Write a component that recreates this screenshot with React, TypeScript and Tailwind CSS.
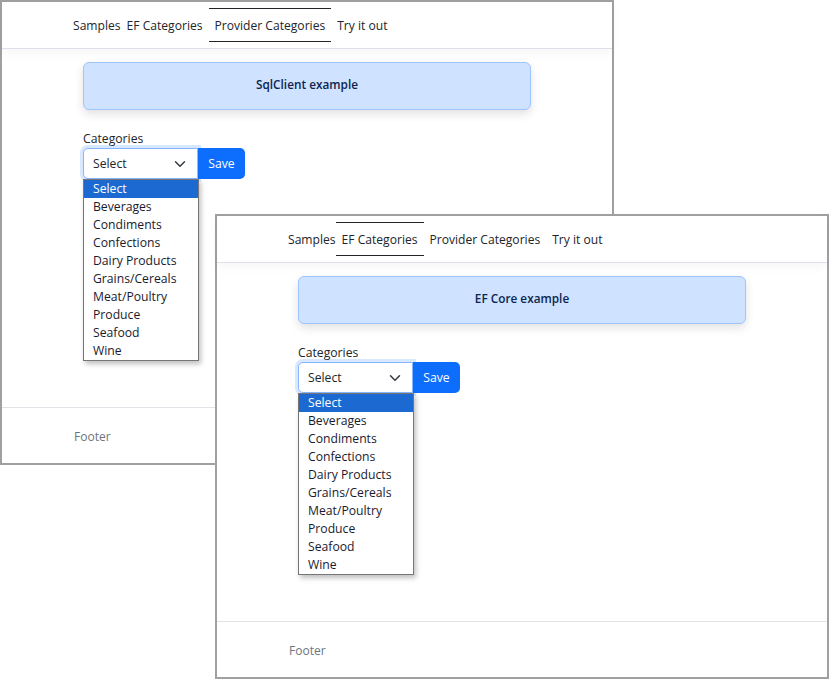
import React from "react";

const NAV = ["EF Categories", "Provider Categories", "Try it out"];
const CATEGORIES = [
  "Select",
  "Beverages",
  "Condiments",
  "Confections",
  "Dairy Products",
  "Grains/Cereals",
  "Meat/Poultry",
  "Produce",
  "Seafood",
  "Wine",
];

function Chevron() {
  return (
    <svg viewBox="0 0 16 16" className="w-[12px] h-[12px]" fill="none">
      <path d="m2 5 6 6 6-6" stroke="#343a40" strokeWidth="2" strokeLinecap="round" strokeLinejoin="round" />
    </svg>
  );
}

function BrowserWindow({ title, active, className }: { title: string; active: number; className: string }) {
  return (
    <div className={`absolute w-[614px] h-[465px] border-2 border-[#a0a0a0] bg-white flex flex-col ${className}`}>
      <header className="h-[47px] shrink-0 border-b border-[#dfe1ea] shadow-[0_4px_10px_rgba(0,0,0,0.04)] pl-[71px] pt-[6px] flex items-start text-[12.1px] text-[#212529]">
        <span className="h-[34px] pt-[2px] flex items-center">Samples</span>
        {NAV.map((n, i) => (
          <span
            key={n}
            className={
              i === active
                ? "h-[34px] px-[6px] pt-[2px] flex items-center border-y border-[#212529]"
                : "h-[34px] px-[6px] pt-[2px] flex items-center border-y border-transparent"
            }
          >
            {n}
          </span>
        ))}
      </header>
      <main className="flex-1 pl-[81px] pt-[13px]">
        <div className="w-[448px] h-[48px] pb-[3px] rounded-[6px] bg-[#cfe2ff] border border-[#9ec5fe] shadow-[0_4px_10px_rgba(0,0,0,0.12)] flex items-center justify-center text-[11.8px] font-semibold text-[#0b2550]">
          {title}
        </div>
        <div className="mt-[20px] text-[12.2px] leading-[17px] text-[#212529]">Categories</div>
        <div className="relative flex mt-[1px]">
          <div className="w-[115px] h-[31px] pt-[1px] rounded-l-[5px] border border-[#86b7fe] shadow-[0_0_0_3px_rgba(13,110,253,0.16)] bg-white flex items-center justify-between pl-[9px] pr-[11px] text-[12.2px] text-[#212529]">
            <span>Select</span>
            <Chevron />
          </div>
          <div className="w-[47px] h-[31px] pt-[1px] rounded-r-[5px] bg-[#0d6efd] text-white text-[12.2px] flex items-center justify-center">
            Save
          </div>
          <ul className="absolute left-0 top-[31px] w-[116px] border border-[#767676] bg-white shadow-[2px_3px_5px_rgba(0,0,0,0.25)] text-[12.2px] text-[#1a1a2e] z-10">
            {CATEGORIES.map((c, i) => (
              <li
                key={c}
                className={
                  i === 0
                    ? "h-[18px] leading-[18px] pl-[9px] bg-[#1c6ad1] text-white"
                    : "h-[18px] leading-[18px] pl-[9px]"
                }
              >
                {c}
              </li>
            ))}
          </ul>
        </div>
      </main>
      <footer className="h-[56px] shrink-0 border-t border-[#e2e3e8] pl-[72px] pt-[2px] flex items-center text-[12px] text-[#6c757d]">
        Footer
      </footer>
    </div>
  );
}

export default function App() {
  return (
    <div className="relative w-[829px] h-[679px] bg-white overflow-hidden font-['Open_Sans',sans-serif]">
      <BrowserWindow title="SqlClient example" active={1} className="left-0 top-0" />
      <BrowserWindow title="EF Core example" active={0} className="left-[215px] top-[214px]" />
    </div>
  );
}
